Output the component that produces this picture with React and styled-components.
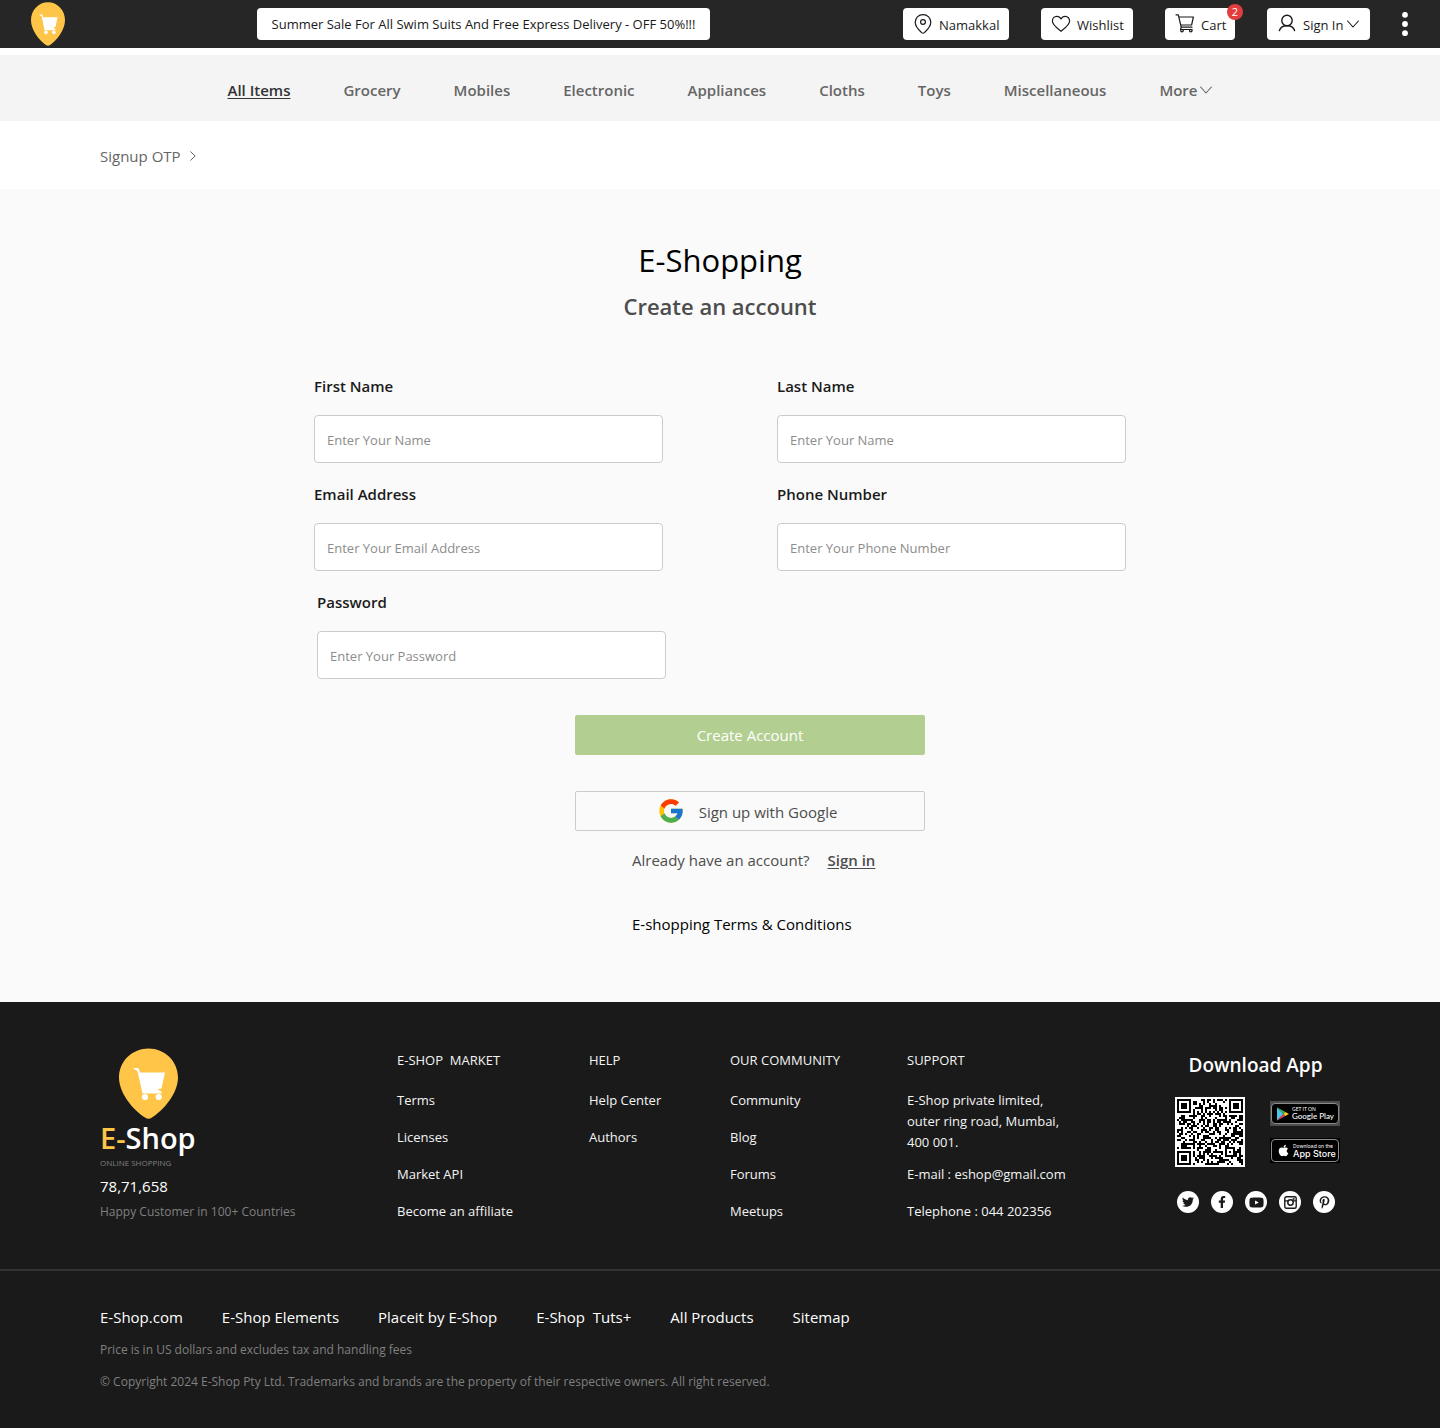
import React from "react";
import styled, { createGlobalStyle } from "styled-components";
import { FcGoogle } from "react-icons/fc";
import { FaApple, FaFacebookF, FaPinterestP, FaTwitter, FaYoutube } from "react-icons/fa";

const GlobalStyle = createGlobalStyle`
  *, *::before, *::after { box-sizing: border-box; }
  body {
    margin: 0;
    background: #fff;
    color: #1a1a1a;
    font-family: "Segoe UI", "Open Sans", "Noto Sans", sans-serif;
    font-size: 15px;
    line-height: 24px;
  }
  a { color: inherit; text-decoration: none; }
  button, input { font: inherit; color: inherit; }
  ul, p, h1, h2, h3 { margin: 0; padding: 0; }
  ul { list-style: none; }
  svg { display: block; flex: none; }
`;

/* ---------- top bar ---------- */

const TopBar = styled.header`
  display: flex;
  align-items: center;
  height: 48px;
  padding: 0 32px 0 31px;
  background: #262626;
`;

const Promo = styled.p`
  min-width: 453px;
  margin-left: 192px;
  padding: 4px 8px;
  border-radius: 4px;
  background: #fff;
  color: #1a1a1a;
  font-size: 13px;
  text-align: center;
  white-space: nowrap;
`;

const Actions = styled.div`
  display: flex;
  align-items: center;
  gap: 32px;
  margin-left: auto;
`;

const ActionButton = styled.button`
  position: relative;
  display: flex;
  align-items: center;
  gap: 4px;
  min-width: ${(p) => p.$min}px;
  height: 32px;
  padding: 0 8px;
  border: 0;
  border-radius: 4px;
  background: #fff;
  font-size: 13px;
  white-space: nowrap;
  cursor: pointer;
`;

const ActionLabel = styled.span`
  padding-top: 2px;
`;

const Badge = styled.span`
  position: absolute;
  top: -4px;
  right: -8px;
  width: 16px;
  height: 16px;
  border-radius: 50%;
  background: #e23e3e;
  color: #fff;
  font-size: 11px;
  line-height: 16px;
  text-align: center;
`;

const MenuButton = styled.button`
  padding: 0;
  border: 0;
  background: none;
  color: #fff;
  cursor: pointer;
`;

/* ---------- navigation ---------- */

const CategoryNav = styled.nav`
  margin-top: 7px;
  padding: 23px 32px 19px;
  background: #f4f4f4;
`;

const CategoryList = styled.ul`
  display: flex;
  justify-content: center;
  gap: 53px;
`;

const CategoryLink = styled.a`
  display: flex;
  align-items: center;
  gap: 3px;
  color: ${(p) => (p.$active ? "#333" : "#666")};
  font-weight: 600;
  text-decoration: ${(p) => (p.$active ? "underline" : "none")};
  text-underline-offset: 2px;
  text-decoration-thickness: 1px;
  white-space: nowrap;
`;

const Breadcrumb = styled.nav`
  display: flex;
  align-items: center;
  gap: 9px;
  padding: 23px 100px 21px;
  color: #666;
`;

/* ---------- sign-up ---------- */

const Main = styled.main`
  display: flex;
  flex-direction: column;
  align-items: center;
  padding: 47px 24px 66px;
  background: #fafafa;
`;

const Title = styled.h1`
  color: #000;
  font-size: 31px;
  font-weight: 400;
  line-height: 48px;
`;

const Subtitle = styled.h2`
  color: #4d4d4d;
  font-size: 22px;
  font-weight: 600;
  line-height: 44px;
`;

const Form = styled.form`
  display: flex;
  flex-direction: column;
  align-items: center;
  gap: 19px;
  width: 100%;
  margin-top: 46px;
`;

const FieldGrid = styled.div`
  display: grid;
  grid-template-columns: repeat(auto-fit, minmax(280px, 349px));
  justify-content: space-between;
  gap: 19px 0;
  width: 100%;
  max-width: ${(p) => p.$max}px;
`;

const Field = styled.div`
  display: flex;
  flex-direction: column;
  gap: 17px;
`;

const Label = styled.label`
  color: #1a1a1a;
  font-weight: 600;
`;

const Input = styled.input`
  width: 100%;
  height: 48px;
  padding: 2px 12px 0;
  border: 1px solid #ccc;
  border-radius: 4px;
  background: #fff;
  font-size: 13px;
  &::placeholder { color: #8c8c8c; opacity: 1; }
`;

const Submission = styled.div`
  display: flex;
  flex-direction: column;
  gap: 36px;
  width: 100%;
  max-width: 410px;
  margin-top: 17px;
  padding-left: 60px;
`;

const SubmitButton = styled.button`
  height: 40px;
  padding: 0;
  border: 0;
  border-radius: 2px;
  background: #b2cf91;
  color: #fff;
  cursor: pointer;
`;

const GoogleButton = styled.button`
  display: flex;
  align-items: center;
  justify-content: center;
  gap: 14px;
  height: 40px;
  padding: 0 6px 0 0;
  border: 1px solid #ccc;
  border-radius: 2px;
  background: transparent;
  color: #4d4d4d;
  cursor: pointer;
`;

const GoogleLabel = styled.span`
  padding-top: 2px;
`;

const Notes = styled.div`
  display: flex;
  flex-direction: column;
  gap: 40px;
  margin-top: -19px;
  padding-left: 57px;
  color: #4d4d4d;
  white-space: nowrap;
`;

const SignInRow = styled.p`
  display: flex;
  gap: 18px;
`;

const SignInLink = styled.a`
  font-weight: 600;
  text-decoration: underline;
  text-decoration-thickness: 1px;
  text-underline-offset: 2px;
`;

const TermsLink = styled.a`
  color: #000;
`;

/* ---------- footer ---------- */

const Footer = styled.footer`
  background: #1a1a1a;
  color: #f4f4f4;
`;

const FooterTop = styled.div`
  display: grid;
  grid-template-columns: 297fr 192fr 141fr 177fr 268fr 165px;
  padding: 46px 100px 31px;
`;

const Brand = styled.div`
  display: flex;
  flex-direction: column;
`;

const BrandMark = styled.div`
  padding-left: 19px;
`;

const BrandName = styled.p`
  color: #fff;
  font-size: 29px;
  font-weight: 600;
  line-height: 38px;
`;

const BrandAccent = styled.span`
  color: #ffc549;
`;

const Tagline = styled.p`
  color: #808080;
  font-size: 8px;
  line-height: 12px;
`;

const Count = styled.p`
  margin-top: 5px;
  color: #fff;
`;

const Muted = styled.p`
  color: #808080;
  font-size: 12px;
`;

const BrandNote = styled(Muted)`
  margin-top: 2px;
`;

const ColumnTitle = styled.h3`
  margin-bottom: 19px;
  padding-top: 2px;
  font-size: 13px;
  font-weight: 400;
  line-height: 21px;
  white-space: pre;
`;

const ColumnList = styled.ul`
  font-size: 13px;
  line-height: 21px;
  white-space: nowrap;
`;

const ColumnItem = styled.li`
  margin-bottom: ${(p) => (p.$tight ? 11 : 16)}px;
`;

const DownloadTitle = styled.h3`
  margin-bottom: 17px;
  padding: 2px 4px 0 0;
  color: #fff;
  font-size: 19px;
  font-weight: 600;
  line-height: 30px;
  text-align: center;
`;

const DownloadRow = styled.div`
  display: flex;
  justify-content: space-between;
`;

const Stores = styled.div`
  display: flex;
  flex-direction: column;
  gap: 12px;
  padding-top: 4px;
`;

const StoreBadge = styled.a`
  display: flex;
  width: 70px;
  height: 25px;
  padding: ${(p) => p.$pad};
  background: ${(p) => p.$frame};
`;

const StoreFace = styled.span`
  display: flex;
  flex: 1;
  align-items: center;
  gap: 3px;
  padding-left: 5px;
  border: 1px solid #8c8c8c;
  border-radius: 4px;
  background: #000;
  color: #fff;
`;

const StoreText = styled.span`
  display: flex;
  flex-direction: column;
  font-family: ${(p) => p.$family}, sans-serif;
  white-space: nowrap;
`;

const StoreHint = styled.small`
  font-size: 5px;
  line-height: 6px;
`;

const StoreName = styled.span`
  font-size: ${(p) => p.$size}px;
  font-weight: 500;
  line-height: 9px;
`;

const Socials = styled.ul`
  display: flex;
  gap: 12px;
  margin-top: 24px;
  padding-left: 2px;
`;

const SocialLink = styled.a`
  display: flex;
  align-items: center;
  justify-content: center;
  width: 22px;
  height: 22px;
  border-radius: 50%;
  background: #fff;
  color: #1a1a1a;
`;

const FooterBottom = styled.div`
  padding: 34px 100px;
  border-top: 2px solid #333;
`;

const SiteLinks = styled.ul`
  display: flex;
  flex-wrap: wrap;
  gap: 8px 39px;
  color: #fff;
  white-space: pre;
`;

const Legal = styled.div`
  display: flex;
  flex-direction: column;
  gap: 8px;
  margin-top: 9px;
`;

/* ---------- drawings ---------- */

const PinLogo = ({ width, height }) => (
  <svg width={width} height={height} viewBox="0 0 59 71" preserveAspectRatio="none" aria-hidden="true">
    <path
      fill="#ffc549"
      d="M29.5 0.5C45.5 0.5 59 13 59 29.5C59 45 45 62 33 69.500Q29.500 72 26 69.500C14 62 0 45 0 29.500C0 13 13.500 0.500 29.500 0.500Z"
    />
    <path
      fill="#fff"
      d="M14 20H18.500Q20 20.200 20.300 21.800L21 24.500H46L42.500 40.500L38.500 41L42.500 43.800V45.500H23.500L18.700 24Q18 22.300 16 21.700Z"
    />
    <circle cx="26" cy="49" r="3.100" fill="#fff" />
    <circle cx="39.700" cy="49" r="3.100" fill="#fff" />
  </svg>
);

const Icon = ({ width = 24, height = 24, children, stroke = 1.2 }) => (
  <svg
    width={width}
    height={height}
    viewBox={`0 0 ${width} ${height}`}
    fill="none"
    stroke="currentColor"
    strokeWidth={stroke}
    strokeLinecap="round"
    strokeLinejoin="round"
    aria-hidden="true"
  >
    {children}
  </svg>
);

const PlaceIcon = () => (
  <Icon>
    <path d="M12 2.600C7.500 2.600 4.200 6 4.200 10.200C4.200 15 8.500 18.500 10.700 20.600Q12 21.700 13.300 20.600C15.500 18.500 19.800 15 19.800 10.200C19.800 6 16.500 2.600 12 2.600Z" />
    <circle cx="12" cy="10" r="2.400" />
  </Icon>
);

const HeartIcon = () => (
  <Icon>
    <path d="M12 7C11 5 9.300 4.400 7.800 4.400C5.200 4.400 3.400 6.400 3.400 9C3.400 13 8.500 16.500 12 19.200C15.500 16.500 20.600 13 20.600 9C20.600 6.400 18.800 4.400 16.200 4.400C14.700 4.400 13 5 12 7Z" />
  </Icon>
);

const CartIcon = () => (
  <Icon>
    <path d="M3 2.800H5.300L8.200 15.200H19M5.800 5H20.400L18.600 13H7.700M8.200 15.200L7.500 17.500H19" />
    <circle cx="9" cy="18.600" r="1.300" />
    <circle cx="17.800" cy="18.600" r="1.300" />
  </Icon>
);

const UserIcon = () => (
  <Icon stroke={1.4}>
    <circle cx="12" cy="8.500" r="5.200" />
    <path d="M4.400 18.500C5.500 15 8.500 13.700 12 13.700S18.500 15 19.600 18.500" />
  </Icon>
);

const ChevronDown = () => (
  <Icon width={12} height={8} stroke={1.1}>
    <path d="M0.600 1L6 7L11.400 1" />
  </Icon>
);

const ChevronRight = () => (
  <Icon width={6} height={10} stroke={1}>
    <path d="M0.700 0.800L5.200 5L0.700 9.200" />
  </Icon>
);

const Dots = () => (
  <svg width="6" height="24" viewBox="0 0 6 24" fill="currentColor" aria-hidden="true">
    <circle cx="3" cy="2.800" r="2.900" />
    <circle cx="3" cy="12" r="2.900" />
    <circle cx="3" cy="21.200" r="2.900" />
  </svg>
);

const InstagramIcon = () => (
  <svg width="13" height="13" viewBox="0 0 13 13" aria-hidden="true">
    <rect x="0.800" y="0.800" width="11.400" height="11.400" rx="1.500" fill="none" stroke="currentColor" strokeWidth="1.400" />
    <path d="M1 4.200H4V5.600H1ZM9 4.200H12V5.600H9Z" fill="currentColor" />
    <rect x="8.600" y="2.200" width="2" height="1.600" fill="currentColor" />
    <circle cx="6.500" cy="6.500" r="2.700" fill="#fff" stroke="currentColor" strokeWidth="1.500" />
  </svg>
);

const PlayIcon = () => (
  <svg width="12" height="14" viewBox="0 0 12 14" aria-hidden="true">
    <path d="M0 0.500L6.500 7L0 13.500Z" fill="#4fc3ea" />
    <path d="M0 0.300L8.300 4.900L6.500 7Z" fill="#3fb565" />
    <path d="M0 13.700L8.300 9.100L6.500 7Z" fill="#e8405a" />
    <path d="M8.300 4.900L12 7L8.300 9.100L6.500 7Z" fill="#fbcb1d" />
  </svg>
);

/* A 33-module code: three finders, one alignment square, timing lines, data. */
const SIZE = 33;
const ring = (dx, dy, outer) => {
  const d = Math.max(Math.abs(dx), Math.abs(dy));
  return d > outer ? null : outer === 2 ? d !== 1 : d !== 2 && d !== 4;
};

const buildModules = () => {
  const cells = [];
  let seed = 20249;
  for (let y = 0; y < SIZE; y += 1) {
    for (let x = 0; x < SIZE; x += 1) {
      seed = (seed * 48271) % 2147483647;
      let on = (seed >> 12) % 2 === 0;
      if (y === 6 || x === 6) on = (x + y) % 2 === 0;
      [
        [3, 3, 4],
        [29, 3, 4],
        [3, 29, 4],
        [26, 26, 2],
      ].forEach(([cx, cy, outer]) => {
        const r = ring(x - cx, y - cy, outer);
        if (r !== null) on = r;
      });
      if (on) cells.push(`M${x + 1} ${y + 1}h1v1h-1z`);
    }
  }
  return cells.join("");
};
const MODULES = buildModules();

const QrCode = () => (
  <svg width="70" height="70" viewBox="0 0 35 35" shapeRendering="crispEdges" role="img" aria-label="QR code">
    <path fill="#fff" d="M0 0H35V35H0Z" />
    <path fill="#000" d={MODULES} />
  </svg>
);

/* ---------- content ---------- */

const categories = ["All Items", "Grocery", "Mobiles", "Electronic", "Appliances", "Cloths", "Toys", "Miscellaneous"];

const fields = [
  { id: "first-name", label: "First Name", placeholder: "Enter Your Name", type: "text" },
  { id: "last-name", label: "Last Name", placeholder: "Enter Your Name", type: "text" },
  { id: "email", label: "Email Address", placeholder: "Enter Your Email Address", type: "email" },
  { id: "phone", label: "Phone Number", placeholder: "Enter Your Phone Number", type: "tel" },
];

const columns = [
  { title: "E-SHOP  MARKET", items: ["Terms", "Licenses", "Market API", "Become an affiliate"] },
  { title: "HELP", items: ["Help Center", "Authors"] },
  { title: "OUR COMMUNITY", items: ["Community", "Blog", "Forums", "Meetups"] },
];

const socials = [
  { name: "Twitter", icon: <FaTwitter size={12} /> },
  { name: "Facebook", icon: <FaFacebookF size={12} /> },
  { name: "YouTube", icon: <FaYoutube size={15} /> },
  { name: "Instagram", icon: <InstagramIcon /> },
  { name: "Pinterest", icon: <FaPinterestP size={13} /> },
];

const siteLinks = ["E-Shop.com", "E-Shop Elements", "Placeit by E-Shop", "E-Shop  Tuts+", "All Products", "Sitemap"];

const TextField = ({ id, label, placeholder, type }) => (
  <Field>
    <Label htmlFor={id}>{label}</Label>
    <Input id={id} type={type} placeholder={placeholder} />
  </Field>
);

export default function App() {
  return (
    <>
      <GlobalStyle />
      <TopBar>
        <a href="#home" aria-label="E-Shop home">
          <PinLogo width={34} height={44} />
        </a>
        <Promo>Summer Sale For All Swim Suits And Free Express Delivery - OFF 50%!!!</Promo>
        <Actions>
          <ActionButton type="button" $min={106}>
            <PlaceIcon />
            <ActionLabel>Namakkal</ActionLabel>
          </ActionButton>
          <ActionButton type="button" $min={92}>
            <HeartIcon />
            <ActionLabel>Wishlist</ActionLabel>
          </ActionButton>
          <ActionButton type="button" $min={70}>
            <CartIcon />
            <ActionLabel>Cart</ActionLabel>
            <Badge>2</Badge>
          </ActionButton>
          <ActionButton type="button" $min={103}>
            <UserIcon />
            <ActionLabel>Sign In</ActionLabel>
            <ChevronDown />
          </ActionButton>
          <MenuButton type="button" aria-label="Menu">
            <Dots />
          </MenuButton>
        </Actions>
      </TopBar>

      <CategoryNav aria-label="Categories">
        <CategoryList>
          {categories.map((name, i) => (
            <li key={name}>
              <CategoryLink href="#category" $active={i === 0}>{name}</CategoryLink>
            </li>
          ))}
          <li>
            <CategoryLink href="#more">
              More
              <ChevronDown />
            </CategoryLink>
          </li>
        </CategoryList>
      </CategoryNav>

      <Breadcrumb aria-label="Breadcrumb">
        <a href="#signup">Signup OTP</a>
        <ChevronRight />
      </Breadcrumb>

      <Main>
        <Title>E-Shopping</Title>
        <Subtitle>Create an account</Subtitle>
        <Form onSubmit={(e) => e.preventDefault()}>
          <FieldGrid $max={812}>
            {fields.map((f) => (
              <TextField key={f.id} {...f} />
            ))}
          </FieldGrid>
          <FieldGrid $max={806}>
            <TextField id="password" label="Password" placeholder="Enter Your Password" type="password" />
          </FieldGrid>
          <Submission>
            <SubmitButton type="submit">Create Account</SubmitButton>
            <GoogleButton type="button">
              <FcGoogle size={28} />
              <GoogleLabel>Sign up with Google</GoogleLabel>
            </GoogleButton>
            <Notes>
              <SignInRow>
                <span>Already have an account?</span>
                <SignInLink href="#signin">Sign in</SignInLink>
              </SignInRow>
              <TermsLink href="#terms">E-shopping Terms &amp; Conditions</TermsLink>
            </Notes>
          </Submission>
        </Form>
      </Main>

      <Footer>
        <FooterTop>
          <Brand>
            <BrandMark>
              <PinLogo width={59} height={71} />
            </BrandMark>
            <BrandName>
              <BrandAccent>E-</BrandAccent>Shop
            </BrandName>
            <Tagline>ONLINE SHOPPING</Tagline>
            <Count>78,71,658</Count>
            <BrandNote>Happy Customer in 100+ Countries</BrandNote>
          </Brand>
          {columns.map((c) => (
            <div key={c.title}>
              <ColumnTitle>{c.title}</ColumnTitle>
              <ColumnList>
                {c.items.map((item) => (
                  <ColumnItem key={item}>
                    <a href="#page">{item}</a>
                  </ColumnItem>
                ))}
              </ColumnList>
            </div>
          ))}
          <div>
            <ColumnTitle>SUPPORT</ColumnTitle>
            <ColumnList>
              <ColumnItem $tight>
                E-Shop private limited,
                <br />
                outer ring road, Mumbai,
                <br />
                400 001.
              </ColumnItem>
              <ColumnItem>
                <a href="mailto:eshop@gmail.com">E-mail : eshop@gmail.com</a>
              </ColumnItem>
              <ColumnItem>Telephone : 044 202356</ColumnItem>
            </ColumnList>
          </div>
          <div>
            <DownloadTitle>Download App</DownloadTitle>
            <DownloadRow>
              <QrCode />
              <Stores>
                <StoreBadge href="#google-play" $frame="#4d4d4d" $pad="2px 1px">
                  <StoreFace>
                    <PlayIcon />
                    <StoreText $family="Lato">
                      <StoreHint>GET IT ON</StoreHint>
                      <StoreName $size={8}>Google Play</StoreName>
                    </StoreText>
                  </StoreFace>
                </StoreBadge>
                <StoreBadge href="#app-store" $frame="#000" $pad="1px">
                  <StoreFace>
                    <FaApple size={13} />
                    <StoreText $family="Inter">
                      <StoreHint>Download on the</StoreHint>
                      <StoreName $size={9}>App Store</StoreName>
                    </StoreText>
                  </StoreFace>
                </StoreBadge>
              </Stores>
            </DownloadRow>
            <Socials>
              {socials.map((s) => (
                <li key={s.name}>
                  <SocialLink href="#social" aria-label={s.name}>{s.icon}</SocialLink>
                </li>
              ))}
            </Socials>
          </div>
        </FooterTop>
        <FooterBottom>
          <SiteLinks>
            {siteLinks.map((name) => (
              <li key={name}>
                <a href="#site">{name}</a>
              </li>
            ))}
          </SiteLinks>
          <Legal>
            <Muted>Price is in US dollars and excludes tax and handling fees</Muted>
            <Muted>
              © Copyright 2024 E-Shop Pty Ltd. Trademarks and brands are the property of their respective owners. All
              right reserved.
            </Muted>
          </Legal>
        </FooterBottom>
      </Footer>
    </>
  );
}
